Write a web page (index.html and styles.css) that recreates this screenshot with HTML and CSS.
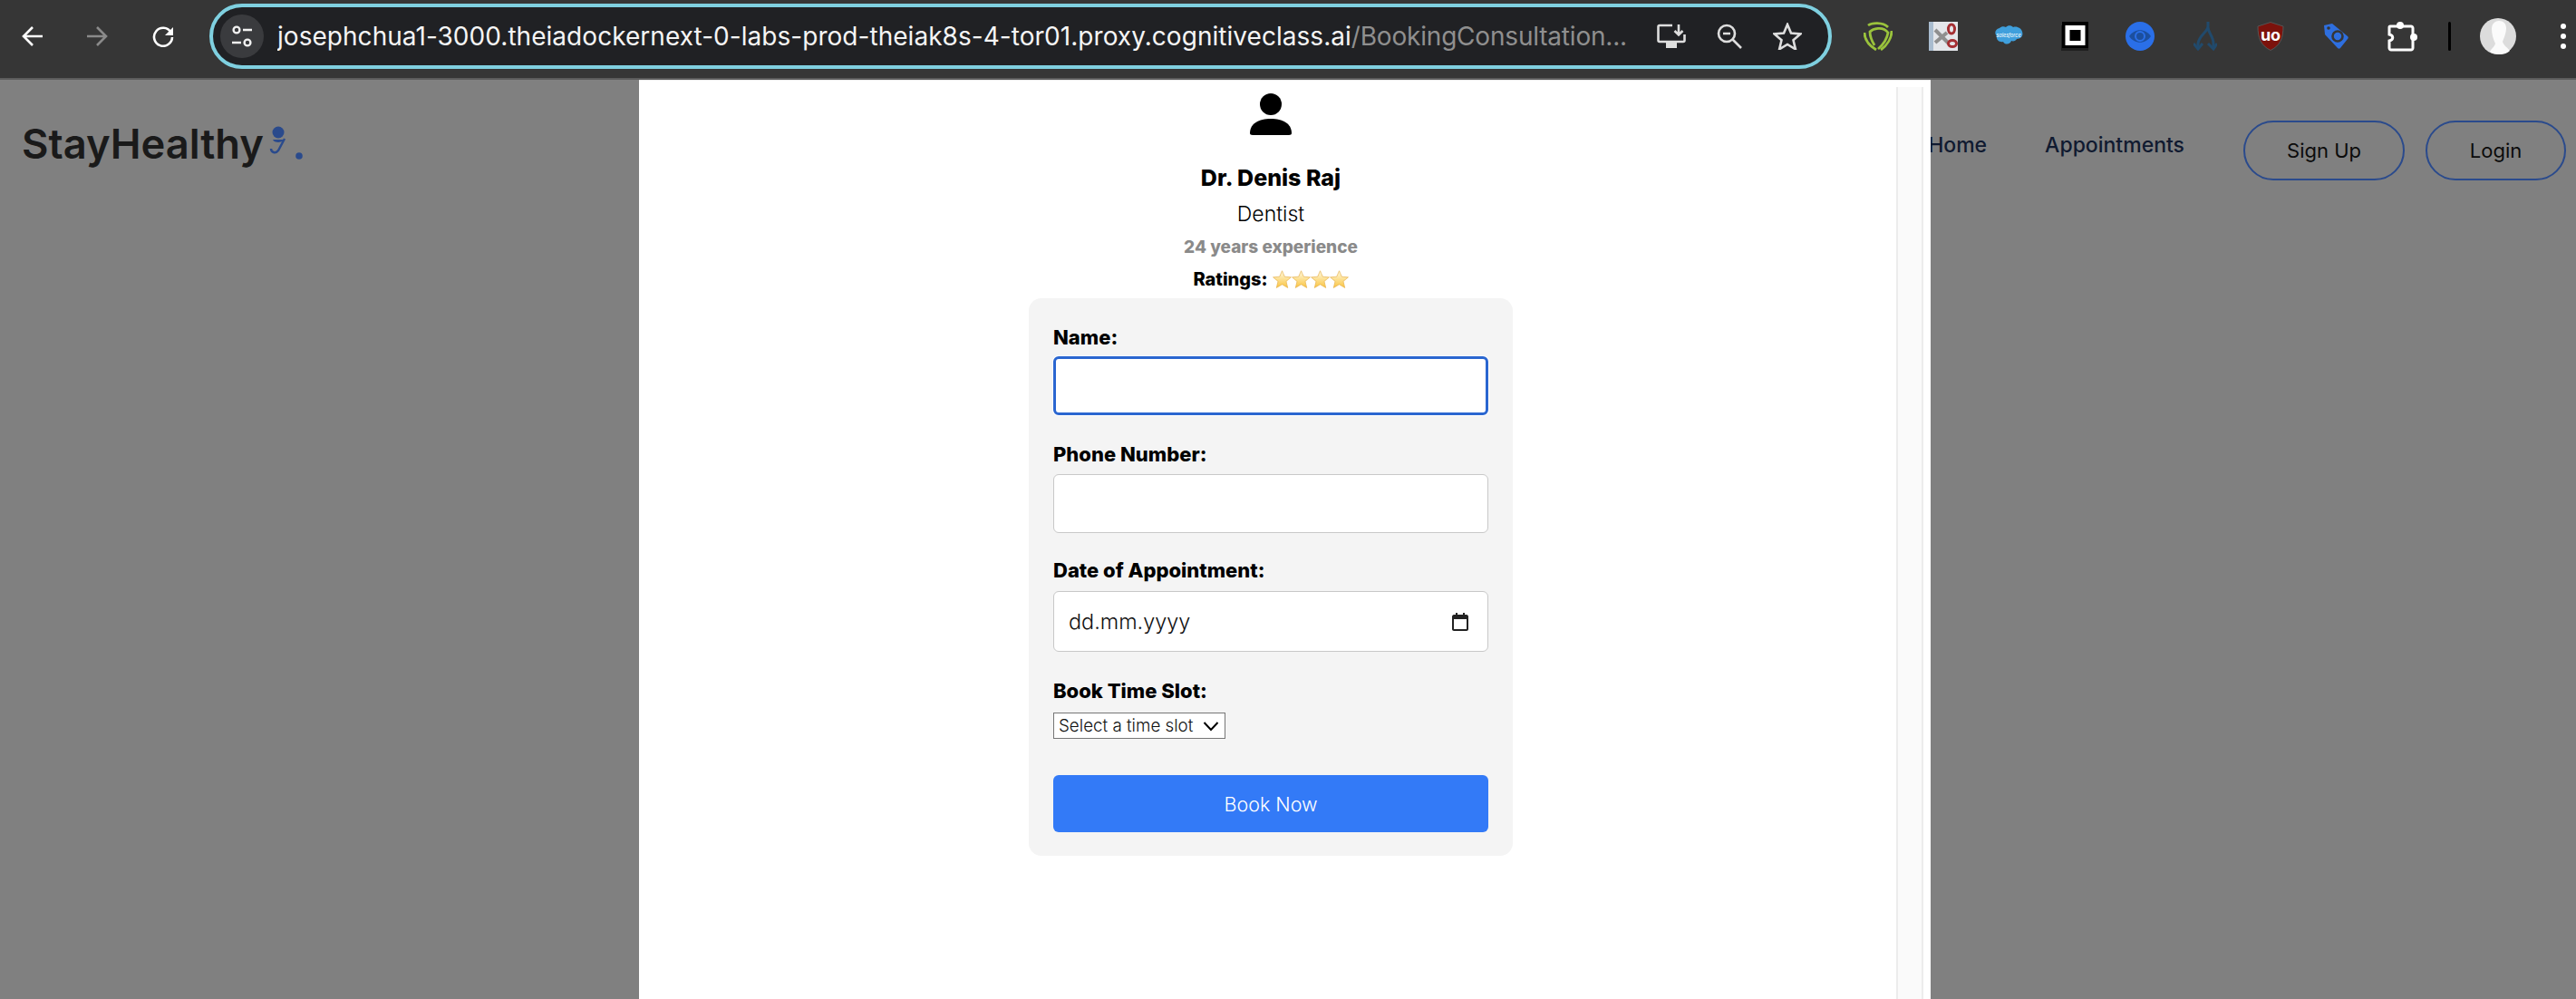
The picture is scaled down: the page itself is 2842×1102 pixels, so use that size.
FILE: index.html
```html
<!DOCTYPE html>
<html lang="en">
<head>
<meta charset="utf-8">
<title>StayHealthy</title>
<link rel="stylesheet" href="styles.css">
</head>
<body>
<div class="toolbar">
  <div class="nav-btns">
    <svg class="nav-ico" viewBox="0 0 24 24"><path class="st-w" d="M23 12H2M12 2 2 12l10 10"/></svg>
    <svg class="nav-ico" viewBox="0 0 24 24"><path class="st-g" d="M1 12h21M12 2l10 10-10 10"/></svg>
    <svg class="nav-ico nav-reload" viewBox="0 0 24 24"><path class="st-w" d="M20.500 7.500A10 10 0 1 0 22 13"/><path class="fill-w" d="M23 2v9h-9z"/></svg>
  </div>
  <div class="omnibox">
    <div class="site-info">
      <svg viewBox="0 0 26 26" width="26" height="26"><circle class="ring" cx="7" cy="6" r="3.400"/><path class="dash" d="M14 6h10M2 20h10"/><circle class="ring" cx="19" cy="20" r="3.400"/></svg>
    </div>
    <div class="url"><span>josephchua1-3000.theiadockernext-0-labs-prod-theiak8s-4-tor01.proxy.cognitiveclass.ai</span><span class="url-dim">/BookingConsultation...</span></div>
    <div class="omni-icons">
      <svg width="32" height="28" viewBox="0 0 32 28"><path class="st-l" d="M17 2H3a1.500 1.500 0 0 0-1.500 1.500v15A1.500 1.500 0 0 0 3 20h26a1.500 1.500 0 0 0 1.500-1.500V12"/><path class="fill-l" d="M10 20h12v7H10z"/><path class="st-l" d="M24 1v11M19.500 8l4.500 4.500L28.500 8"/></svg>
      <svg width="28" height="28" viewBox="0 0 28 28"><circle class="st-l" cx="11" cy="11" r="9"/><path class="st-l" d="M17.500 17.500 27 27M7 11h8"/></svg>
      <svg width="32" height="30" viewBox="0 0 32 30"><path class="st-l" d="m16 2 4 9.600 10.400.8-7.900 6.800 2.400 10.100L16 23.900l-8.900 5.400 2.400-10.100-7.900-6.800 10.400-.8z"/></svg>
    </div>
  </div>
  <div class="extensions">
    <div class="ext-grid">
      <svg class="ext" width="32" height="32" viewBox="0 0 32 32"><path class="shield-a" d="M5 4C9 1 21 0 27 6"/><path class="shield-a" d="M31 10c0 8-5 16-12 21"/><path class="shield-a" d="M14 31C6 26 1 20 1 12"/><path class="shield-a" d="M12 26C9 21 7 16 7 11c3-3 14-7 20 1-1 6-5 13-11 18"/></svg>
      <svg class="ext" width="32" height="32" viewBox="0 0 32 32"><rect width="32" height="32" fill="#e4e6ea"/><rect width="5" height="32" fill="#a9bccf"/><path d="M7 9 22 24" stroke="#8f8f8f" stroke-width="4"/><path d="M7 23 20 12" stroke="#8f8f8f" stroke-width="4"/><ellipse cx="25" cy="8" rx="3.500" ry="5" fill="none" stroke="#a52f33" stroke-width="3"/><ellipse cx="26" cy="24" rx="4.500" ry="3.500" fill="none" stroke="#a52f33" stroke-width="3"/></svg>
      <svg class="ext" width="32" height="26" viewBox="0 0 32 26"><path fill="#3f9fdc" d="M13 3c2-2.500 6-2.500 8 0 4-1.500 9 1 10 5 1.500 4-1 8-6 8-1 2-4 3-6 2-1 4-7 5-9 1-4 1-8-2-7-6-3-3-2-8 3-9 2-2 5-2 7-1z"/><text class="sf-text" x="16" y="14">salesforce</text></svg>
      <svg class="ext" width="30" height="32" viewBox="0 0 30 32"><rect y="4" width="30" height="28" fill="#1f1f1f"/><rect x="1" width="29" height="29" fill="#000"/><rect x="4.500" y="4" width="22" height="22" fill="#fff"/><rect x="9.500" y="9" width="12" height="12" fill="#000"/></svg>
      <svg class="ext" width="32" height="32" viewBox="0 0 32 32"><circle cx="16" cy="16" r="16" fill="#2a6fe8"/><path fill="#1c4f9e" d="M4 16c6-9 18-9 24 0-6 9-18 9-24 0z"/><circle cx="16" cy="16" r="5" fill="none" stroke="#2a6fe8" stroke-width="2"/></svg>
      <svg class="ext" width="26" height="32" viewBox="0 0 26 32"><path d="M16 0v5C16 11 6 15 5 24v6M16 6c0 6 6 10 6 18v6" fill="none" stroke="#214a6c" stroke-width="3"/><path d="m0 24 5 6 5-6M16 24l6 6 4-6" fill="none" stroke="#214a6c" stroke-width="3"/></svg>
      <svg class="ext" width="30" height="32" viewBox="0 0 30 32"><path fill="#7c120c" stroke="#555" d="M15 .5 29 5c0 13-3 21-14 26.500C4 26 1 18 1 5z"/><text class="ub-text" x="15" y="21">uo</text></svg>
      <svg class="ext" width="28" height="28" viewBox="0 0 28 28"><path fill="#2e6fdf" d="M1 2 10 0l17 14c1 1 1 2 0 3l-8 10c-1 1-2 1-3 0L2 12z"/><circle cx="16" cy="14" r="5.500" fill="#2e6fdf" stroke="#363636" stroke-width="2.600"/><circle cx="6" cy="5" r="1.800" fill="#363636"/></svg>
      <svg class="ext" width="34" height="34" viewBox="0 0 34 34"><circle class="puzzle-dot" cx="15" cy="5" r="4"/><circle class="puzzle-dot" cx="30" cy="18" r="4"/><path class="puzzle" d="M4 6h23c1 0 2 1 2 2v22c0 1-1 2-2 2H5c-1 0-2-1-2-2v-8c5-1 5-6 0-7V7c0-.5.5-1 1-1z"/></svg>
    </div>
    <div class="ext-divider"></div>
    <svg class="avatar" width="40" height="40" viewBox="0 0 40 40"><circle cx="20" cy="20" r="20" fill="#dcdcdc"/><path fill="#fbfbfb" d="M13 12c0-6 4-9 8-9 5 0 8 3 8 8 0 6-3 12-4 15 1 4 6 7 8 10-4 4-9 4-13 4-3-1-7-1-9-3 2-4 5-5 6-9-2-4-4-10-4-16z"/></svg>
    <div class="menu-dots"><i></i><i></i><i></i></div>
  </div>
</div>

<div class="viewport">
  <header class="site-header">
    <div class="logo">
      <span>StayHealthy</span>
      <svg class="logo-mark" width="42" height="42" viewBox="0 0 42 42"><circle class="mark-fill" cx="15" cy="7" r="6.500"/><path class="mark-fill" d="M9 15h12c-1 4-11 4-12 0z"/><path class="mark-line" d="M22 14 15 27c-3 4-8 2-8-2"/><circle class="mark-fill" cx="38" cy="33" r="3.800"/></svg>
    </div>
    <nav class="site-nav">
      <a class="nav-link nav-home">Home</a>
      <a class="nav-link nav-appt">Appointments</a>
      <button class="pill pill-signup">Sign Up</button>
      <button class="pill pill-login">Login</button>
    </nav>
  </header>

  <section class="modal">
    <div class="modal-body">
      <svg class="person" width="46" height="46" viewBox="0 0 46 46"><circle cx="23" cy="12" r="12"/><path d="M0 44c0-11 10-16 23-16s23 5 23 16c0 1-1 2-3 2H3c-2 0-3-1-3-2z"/></svg>
      <div class="doc-name">Dr. Denis Raj</div>
      <div class="doc-spec">Dentist</div>
      <div class="doc-exp">24 years experience</div>
      <div class="doc-rate">
        <span>Ratings:</span>
        <span class="stars">
          <svg class="star" viewBox="0 0 22 22"><use href="#star-shape"/></svg>
          <svg class="star" viewBox="0 0 22 22"><use href="#star-shape"/></svg>
          <svg class="star" viewBox="0 0 22 22"><use href="#star-shape"/></svg>
          <svg class="star" viewBox="0 0 22 22"><use href="#star-shape"/></svg>
        </span>
      </div>
      <form class="card">
        <div class="field field-a">
          <label class="lbl lbl-a">Name:</label>
          <input class="inp inp-focus" type="text">
        </div>
        <div class="field field-b">
          <label class="lbl lbl-b">Phone Number:</label>
          <input class="inp" type="tel">
        </div>
        <div class="field field-c">
          <label class="lbl lbl-c">Date of Appointment:</label>
          <div class="inp inp-date">
            <span>dd.mm.yyyy</span>
            <svg width="20" height="20" viewBox="0 0 20 20"><path fill="#222" d="M5 0h2v2h6V0h2v2h2c1 0 2 1 2 2v14c0 1-1 2-2 2H3c-1 0-2-1-2-2V4c0-1 1-2 2-2h2zM3 7v11h14V7z"/></svg>
          </div>
        </div>
        <div class="field field-d">
          <label class="lbl lbl-d">Book Time Slot:</label>
          <select class="slot"><option>Select a time slot</option></select>
        </div>
        <button class="book" type="button">Book Now</button>
      </form>
    </div>
    <div class="modal-scroll"></div>
  </section>
</div>

<svg class="defs" width="0" height="0">
  <defs>
    <linearGradient id="star-grad" x1="0" y1="0" x2="0" y2="1">
      <stop offset="0" stop-color="#fffbe2"/>
      <stop offset="1" stop-color="#fac440"/>
    </linearGradient>
    <path id="star-shape" fill="url(#star-grad)" stroke="#e6b04a" stroke-width=".7" stroke-linejoin="round" d="m11 .8 2.900 6.700 7.500.7-5.700 4.800 1.800 7.400L11 16.500l-6.500 3.900 1.800-7.400L.6 8.200l7.500-.7z"/>
  </defs>
</svg>
</body>
</html>
```

FILE: styles.css
```css
* { box-sizing: border-box; }
html, body { margin: 0; padding: 0; }
body { width: 2842px; height: 1102px; overflow: hidden; font-family: Inter, "Liberation Sans", sans-serif; background: #808080; }

.toolbar { height: 88px; background: #363636; border-bottom: 2px solid #5c5c5c; display: flex; align-items: flex-start; }
.nav-btns { display: flex; gap: 47px; padding: 28px 0 0 24px; width: 231px; flex: none; }
.nav-ico { width: 24px; height: 24px; flex: none; }
.nav-reload { margin-left: 2px; }
.st-w, .st-g, .st-l { fill: none; stroke-width: 2.600; }
.st-w { stroke: #fff; }
.st-g { stroke: #8a8a8a; }
.st-l { stroke: #dedede; }
.fill-w { fill: #fff; }
.fill-l { fill: #dedede; }

.omnibox { margin-top: 4px; width: 1790px; height: 72px; flex: none; background: #202124; border: 4px solid #7fd0e0; border-radius: 36px; display: flex; align-items: center; padding-left: 8px; }
.site-info { width: 48px; height: 48px; border-radius: 50%; background: #3a3b3e; display: flex; align-items: center; justify-content: center; flex: none; }
.ring { fill: none; stroke: #f1f1f1; stroke-width: 2.400; }
.dash { stroke: #f1f1f1; stroke-width: 2.400; fill: none; }
.url { margin-left: 15px; width: 1490px; flex: none; font-size: 28px; letter-spacing: .04px; color: #f5f5f5; white-space: nowrap; overflow: hidden; }
.url-dim { color: #8f8f8f; letter-spacing: -.2px; }
.omni-icons { margin-left: 32px; display: flex; align-items: center; gap: 34px; flex: none; }

.extensions { display: flex; align-items: center; height: 80px; padding-left: 15px; flex: none; }
.ext-grid { display: grid; grid-auto-flow: column; grid-auto-columns: 72.200px; align-items: center; justify-items: center; flex: none; }
.ext { display: block; }
.shield-a { fill: none; stroke: #9ac33c; stroke-width: 2.800; }
.sf-text { fill: #fff; font-size: 5.500px; text-anchor: middle; font-style: italic; }
.ub-text { fill: #fff; font-size: 18px; font-weight: 700; text-anchor: middle; }
.puzzle { fill: none; stroke: #fff; stroke-width: 3; }
.puzzle-dot { fill: #fff; }
.ext-divider { width: 3px; height: 32px; background: #000; border-radius: 2px; margin: 0 32px 0 15px; flex: none; }
.avatar { flex: none; }
.menu-dots { display: flex; flex-direction: column; gap: 5px; margin-left: 49px; flex: none; }
.menu-dots i { display: block; width: 6px; height: 6px; border-radius: 50%; background: #fff; }

.viewport { position: relative; height: 1014px; background: #808080; }

.site-header { display: flex; justify-content: space-between; align-items: flex-start; padding: 45px 11px 0 24px; }
.logo { display: flex; align-items: flex-start; font-size: 45.300px; line-height: 52px; font-weight: 600; color: #1a1a1a; }
.logo-mark { margin-left: 1px; margin-top: 6px; flex: none; }
.mark-fill { fill: #2a4a8c; }
.mark-line { fill: none; stroke: #2a4a8c; stroke-width: 2.400; }
.site-nav { display: flex; align-items: flex-start; }
.nav-link { font-size: 23px; font-weight: 500; color: #101a30; line-height: 30px; margin-top: 12px; }
.nav-appt { margin-left: 64px; }
.pill { height: 66px; background: transparent; border: 2.500px solid #2a4a8c; border-radius: 33px; font: 400 22px Inter, "Liberation Sans", sans-serif; color: #0b0b0b; padding: 0; }
.pill-signup { width: 178px; margin-left: 65px; }
.pill-login { width: 155px; margin-left: 23px; }

.modal { position: absolute; left: 705px; top: 0; width: 1425px; height: 1014px; background: #fff; display: flex; padding-left: 7px; border-top: 1px solid #eee; }
.modal-body { width: 1380px; flex: none; display: flex; flex-direction: column; align-items: center; padding-top: 14px; color: #000; }
.modal-scroll { margin-top: 7px; width: 30px; flex: none; background: #fafafa; border-left: 2px solid #ececec; border-right: 2px solid #ececec; }

.person { display: block; flex: none; }
.doc-name { margin-top: 30px; font-size: 25px; line-height: 34px; font-weight: 800; }
.doc-spec { margin-top: 8px; font-size: 23px; line-height: 30px; font-weight: 300; }
.doc-exp { margin-top: 9px; font-size: 19px; line-height: 26px; font-weight: 800; color: #8a8a8a; }
.doc-rate { margin-top: 9px; display: flex; align-items: center; gap: 5px; font-size: 20px; line-height: 26px; font-weight: 800; }
.stars { display: flex; }
.star { width: 21px; height: 21px; display: block; flex: none; }

.card { margin-top: 8px; width: 534px; height: 615px; background: #f4f4f4; border-radius: 14px; padding: 26px 27px 0; display: flex; flex-direction: column; flex: none; }
.field { display: flex; flex-direction: column; align-items: flex-start; flex: none; }
.field-b { margin-top: 26px; }
.field-c { margin-top: 24px; }
.field-d { margin-top: 26px; }
.lbl { height: 34px; line-height: 34px; font-size: 22px; font-weight: 800; color: #000; }
.lbl-a { margin-bottom: 4px; }
.lbl-b { margin-bottom: 5px; }
.lbl-c { margin-bottom: 6px; }
.lbl-d { margin-bottom: 7px; }
.inp { width: 480px; height: 65px; background: #fff; border: 1.500px solid #c8c8c8; border-radius: 6px; padding: 0 16px; font: 300 23.400px Inter, "Liberation Sans", sans-serif; color: #111; outline: none; }
.inp-focus { border: 3px solid #2a66d0; box-shadow: 0 0 0 1px #fff; }
.inp-date { height: 67px; display: flex; align-items: center; justify-content: space-between; padding-right: 20px; }
.slot { appearance: none; width: 190px; height: 29px; border: 1.500px solid #767676; border-radius: 0; font: 300 18.800px Inter, "Liberation Sans", sans-serif; color: #111; padding: 0 0 0 5px; background: #fff url("data:image/svg+xml,%3Csvg xmlns='http://www.w3.org/2000/svg' width='18' height='12' viewBox='0 0 18 12'%3E%3Cpath d='M1.500 2 9 10l7.500-8' fill='none' stroke='%23000' stroke-width='2'/%3E%3C/svg%3E") no-repeat right 6px center; }
.book { margin-top: 40px; width: 480px; height: 63px; background: #337af7; border: 0; border-radius: 6px; color: #fff; font: 300 21.500px Inter, "Liberation Sans", sans-serif; flex: none; }
.defs { position: absolute; }
```
